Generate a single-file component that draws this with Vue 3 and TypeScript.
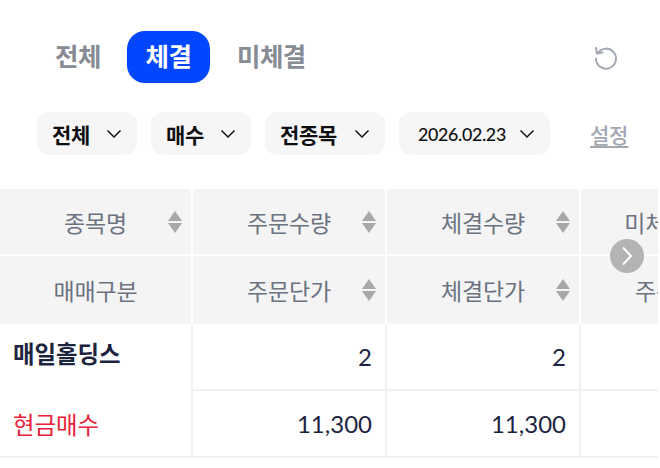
<script setup lang="ts">
const tabs = [
  { label: "전체", active: false },
  { label: "체결", active: true },
  { label: "미체결", active: false },
];

const filters = [
  { label: "전체", date: false },
  { label: "매수", date: false },
  { label: "전종목", date: false },
  { label: "2026.02.23", date: true },
];

const headers = ["종목명", "주문수량", "체결수량", "미체결수량", "매매구분", "주문단가", "체결단가", "주문금액"];
const noSort = "매매구분";
</script>

<template>
  <div class="page">
    <div class="tabs">
      <div class="tab-list">
        <button
          v-for="tab in tabs"
          :key="tab.label"
          class="tab"
          :class="{ active: tab.active }"
        >
          {{ tab.label }}
        </button>
      </div>
      <svg class="refresh" width="28" height="28" viewBox="0 0 28 28" fill="none">
        <path
          d="M6.6 10.2A10 10 0 1 1 5 15.5"
          stroke="#a4a9b2"
          stroke-width="2"
          stroke-linecap="round"
        />
        <path
          d="M5 5L6 10.6L11.6 9.6"
          stroke="#a4a9b2"
          stroke-width="2"
          stroke-linecap="round"
          stroke-linejoin="round"
        />
      </svg>
    </div>

    <div class="filters">
      <div
        v-for="filter in filters"
        :key="filter.label"
        class="filter"
        :class="{ date: filter.date }"
      >
        <span>{{ filter.label }}</span>
        <svg width="16" height="10" viewBox="0 0 16 10" fill="none">
          <path d="M1.5 1.5L8 8L14.5 1.5" stroke="#111" stroke-width="1.5" />
        </svg>
      </div>
      <a class="setting">설정</a>
    </div>

    <div class="table">
      <div class="grid head-grid">
        <div v-for="head in headers" :key="head" class="head">
          <span>{{ head }}</span>
          <span v-if="head !== noSort" class="sort">
            <i class="up"></i>
            <i class="down"></i>
          </span>
        </div>
      </div>
      <div class="grid body-grid">
        <div class="name-cell">
          <strong>매일홀딩스</strong>
          <span>현금매수</span>
        </div>
        <div class="num">2</div>
        <div class="num">2</div>
        <div class="num"></div>
        <div class="num">11,300</div>
        <div class="num">11,300</div>
        <div class="num"></div>
      </div>
      <button class="next">
        <svg width="12" height="20" viewBox="0 0 12 20" fill="none">
          <path d="M2 1.5L10 10L2 18.5" stroke="#fff" stroke-width="2" />
        </svg>
      </button>
    </div>
  </div>
</template>

<style>
html,
body {
  background: #fff;
}
</style>

<style scoped>
.page {
  width: 660px;
  height: 468px;
  overflow: hidden;
  background: #fff;
  font-family: "Noto Sans CJK KR", "Noto Sans", sans-serif;
}

.tabs {
  display: flex;
  align-items: center;
  justify-content: space-between;
  padding: 31px 41px 0 37px;
}

.tab-list {
  display: flex;
  align-items: center;
}

.tab {
  height: 52px;
  padding: 0 18px 6px;
  border: 0;
  border-radius: 18px;
  background: none;
  color: #868b94;
  font-family: inherit;
  font-size: 25.5px;
  font-weight: 700;
  letter-spacing: -0.5px;
}

.tab.active {
  width: 83px;
  margin: 0 9px 0 8px;
  padding: 0 0 6px;
  background: #0246ff;
  color: #fff;
}

.filters {
  display: flex;
  align-items: center;
  gap: 14px;
  margin-top: 29px;
  padding-left: 37px;
}

.filter {
  box-sizing: border-box;
  display: flex;
  align-items: center;
  justify-content: space-between;
  height: 43px;
  padding: 0 15px 0 15px;
  border-radius: 12px;
  background: #f6f6f7;
  color: #0e0e10;
  font-size: 21px;
  font-weight: 700;
  letter-spacing: -0.3px;
}

.filter:nth-child(1),
.filter:nth-child(2) {
  width: 100px;
}

.filter:nth-child(3) {
  width: 120px;
}

.filter.date {
  width: 151px;
  padding: 0 15px 0 19px;
  font-family: Lato, "Noto Sans", sans-serif;
  font-size: 17.8px;
  font-weight: 500;
}

.setting {
  margin-left: 26px;
  color: #a2a7b0;
  font-size: 21px;
  font-weight: 500;
  letter-spacing: -0.2px;
  text-decoration: underline;
  text-underline-offset: 3px;
  white-space: nowrap;
}

.table {
  position: relative;
  width: 658px;
  margin-top: 34px;
  overflow: hidden;
  border-bottom: 2px solid #f1f1f3;
}

.grid {
  display: grid;
  grid-template-columns: 191px 192px 192px 192px;
  gap: 2px;
  width: 773px;
}

.head-grid {
  grid-template-rows: 65px 68px;
  background: #fff;
}

.body-grid {
  grid-template-rows: 65px 65px;
  background: #f1f1f3;
}

.head {
  position: relative;
  display: flex;
  align-items: center;
  justify-content: center;
  background: #f4f4f5;
  color: #6b7280;
  font-size: 23px;
  letter-spacing: -0.1px;
}

.sort {
  position: absolute;
  top: 50%;
  right: 9px;
  display: flex;
  flex-direction: column;
  gap: 2px;
  transform: translateY(-50%);
}

.sort i {
  display: block;
  width: 0;
  height: 0;
  border-left: 7px solid transparent;
  border-right: 7px solid transparent;
}

.sort .up {
  border-bottom: 10px solid #a8a8a8;
}

.sort .down {
  border-top: 10px solid #a8a8a8;
}

.name-cell {
  grid-row: span 2;
  display: flex;
  flex-direction: column;
  gap: 39px;
  padding: 13px 13px;
  background: #fff;
  font-size: 23.4px;
}

.name-cell strong {
  color: #1d2440;
  font-weight: 700;
  line-height: 32px;
}

.name-cell span {
  color: #e8203a;
  line-height: 32px;
}

.num {
  display: flex;
  align-items: center;
  justify-content: flex-end;
  padding-right: 13px;
  background: #fff;
  color: #1d2440;
  font-family: Lato, "Noto Sans", sans-serif;
  font-size: 24px;
}

.next {
  position: absolute;
  top: 50px;
  left: 610px;
  display: flex;
  align-items: center;
  justify-content: center;
  width: 34px;
  height: 34px;
  padding: 0;
  border: 0;
  border-radius: 50%;
  background: #b3b3b3;
}
</style>
